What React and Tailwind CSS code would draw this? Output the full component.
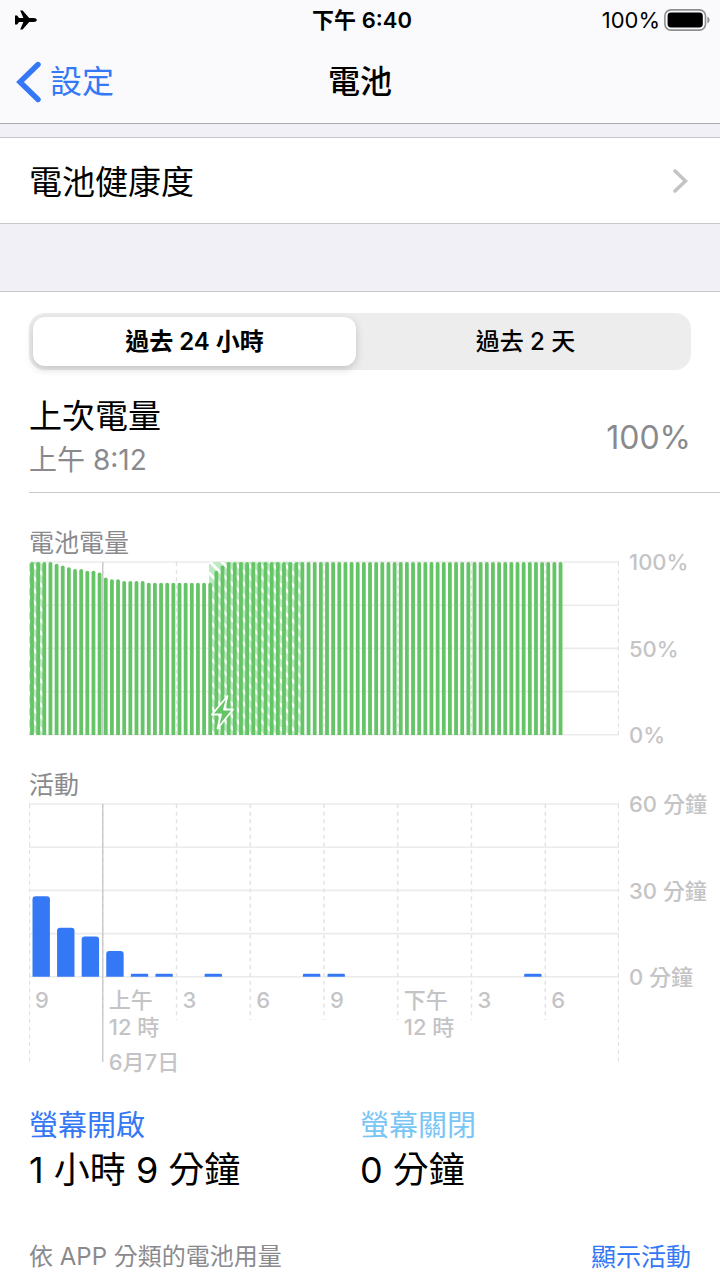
import React from "react";
import { useState } from "react";

const PLOT_WIDTH = 590;
const HOUR = PLOT_WIDTH / 24;

// one reading per quarter of an hour
const levels = [
  100, 100, 100, 100, 99, 98, 97, 96, 96, 95, 95, 94, 91, 90, 90, 89, 89, 89, 89,
  ...Array(11).fill(88),
  95, 98,
  ...Array(55).fill(100),
];

const charging = [
  { from: 0, width: 14 },
  { from: 180, width: 94 },
];

const activity = [
  { hour: 0, minutes: 28 },
  { hour: 1, minutes: 17 },
  { hour: 2, minutes: 14 },
  { hour: 3, minutes: 9 },
  { hour: 4, minutes: 1 },
  { hour: 5, minutes: 1 },
  { hour: 7, minutes: 1 },
  { hour: 11, minutes: 1 },
  { hour: 12, minutes: 1 },
  { hour: 20, minutes: 1 },
];

const hours = [
  { label: "9" },
  { label: "上午", second: "12 時", date: "6月7日" },
  { label: "3" },
  { label: "6" },
  { label: "9" },
  { label: "下午", second: "12 時" },
  { label: "3" },
  { label: "6" },
];

const Grid = ({ bottom, edgeBottom }) => (
  <g>
    {[0, 1, 2, 3, 4].map((i) => (
      <line key={i} x1="0" x2={PLOT_WIDTH} y1={1 + i * 43.2} y2={1 + i * 43.2} stroke="#ebebeb" strokeWidth="1.6" />
    ))}
    {[...Array(9).keys()].map((i) => {
      const x = Math.min(Math.max(i * 73.75, 0.5), PLOT_WIDTH - 0.5);
      const end = i === 0 || i === 8 ? edgeBottom : bottom;
      return (
        <line key={i} x1={x} x2={x} y1="1" y2={end} stroke="#e2e2e2" strokeWidth="1.4" strokeDasharray="4 3.68" />
      );
    })}
    <line x1="73.75" x2="73.75" y1="1" y2={edgeBottom} stroke="#c9c9cb" strokeWidth="1.4" />
  </g>
);

const BatteryChart = () => (
  <svg viewBox="0 0 590 175" className="block w-full" role="img" aria-label="電池電量">
    <defs>
      <pattern id="hatch" width="12" height="12" patternUnits="userSpaceOnUse">
        <rect width="12" height="12" fill="#bdeac1" />
        <path d="M-3 -3 L15 15 M-3 9 L3 15 M9 -3 L15 3" stroke="#fff" strokeWidth="3" />
      </pattern>
    </defs>
    <Grid bottom={174} edgeBottom={174} />
    {charging.map((c) => (
      <rect key={c.from} x={c.from} y="1" width={c.width} height="173" fill="url(#hatch)" />
    ))}
    {levels.map((level, i) => {
      const x = 1.1 + (i * HOUR) / 4;
      const top = 174 - level * 1.73;
      return (
        <path
          key={i}
          d={`M${x} 174 V${top + 1.8} a1.9 1.8 0 0 1 3.8 0 V174 Z`}
          fill="#65c466"
        />
      );
    })}
    <path
      d="M198.5 135 L183 153.5 H192 L188.5 167.5 L204 148.5 H195 Z"
      fill="#65c466"
      stroke="#fff"
      strokeWidth="1.8"
      strokeLinejoin="round"
    />
  </svg>
);

const ActivityChart = () => (
  <svg viewBox="0 0 590 260" className="col-start-1 row-start-1 block w-full" role="img" aria-label="活動">
    <Grid bottom={217} edgeBottom={259} />
    {activity.map(({ hour, minutes }) => {
      const x = 3.5 + hour * HOUR;
      const h = Math.max(minutes * 2.88, 3);
      const r = minutes > 1 ? 3 : 1;
      return (
        <path
          key={hour}
          d={`M${x} 173.8 v${r - h} q0 ${-r} ${r} ${-r} h${17.4 - 2 * r} q${r} 0 ${r} ${r} v${h - r} Z`}
          fill="#3478f6"
        />
      );
    })}
  </svg>
);

const ScaleLabels = ({ labels }) => (
  <div className="-my-3 flex h-[199px] w-[101px] flex-col justify-between pl-[10px] text-[22px] leading-[26px] font-medium whitespace-nowrap text-[#c4c4c6]">
    {labels.map((label) => (
      <span key={label}>{label}</span>
    ))}
  </div>
);

const Header = () => (
  <header className="border-b border-[#acacae] bg-[#fafafc]">
    <div className="grid h-10 grid-cols-3 items-center pr-[10px] pl-[14px] text-[22px]">
      <svg viewBox="0 0 24 20" className="h-5 w-6" aria-hidden="true">
        <path
          d="M22.8 10 c0 1.2 -1.3 2 -3 2 h-4.6 L8.6 19.4 H6.2 L9.4 12 H5 L3.2 14.4 H1 V5.6 H3.2 L5 8 H9.4 L6.2 0.6 H8.6 L15.2 8 h4.6 c1.7 0 3 .8 3 2 Z"
          fill="#000"
        />
      </svg>
      <span className="text-center font-semibold">下午 6:40</span>
      <span className="flex items-center justify-end gap-1">
        100%
        <svg viewBox="0 0 46 22" className="h-[22px] w-[46px]" aria-hidden="true">
          <rect x="0.9" y="0.9" width="40.6" height="20.2" rx="6" fill="none" stroke="#8e8e90" strokeWidth="1.6" />
          <rect x="3.6" y="3.6" width="35.2" height="14.8" rx="3.4" fill="#000" />
          <path d="M43.4 7.4 q2.2 1.2 2.2 3.6 q0 2.4 -2.2 3.6 Z" fill="#8e8e90" />
        </svg>
      </span>
    </div>
    <nav className="grid h-[83px] grid-cols-3 items-center px-4">
      <a href="#settings" className="flex items-center gap-2 text-[32px] text-[#3478f6]">
        <svg viewBox="0 0 26 42" className="h-[42px] w-[26px]" aria-hidden="true">
          <path d="M22 3.5 L4 21 L22 38.5" fill="none" stroke="#3478f6" strokeWidth="5.4" strokeLinecap="round" strokeLinejoin="miter" />
        </svg>
        設定
      </a>
      <h1 className="text-center text-[32px] font-medium">電池</h1>
    </nav>
  </header>
);

const App = () => {
  const [range, setRange] = useState("24h");

  const tabClass = (value) =>
    range === value
      ? "flex-1 rounded-xl bg-white font-semibold shadow-[0_3px_8px_rgba(0,0,0,0.18)]"
      : "flex-1 rounded-xl font-medium";

  return (
    <div
      lang="zh-Hant"
      className="min-h-screen bg-[#f0f0f6] font-['Inter','Noto_Sans_CJK_TC',sans-serif] text-black"
    >
      <Header />
      <a
        href="#health"
        className="mt-[13px] flex h-[87px] items-center justify-between border-y border-[#c8c8ca] bg-white pr-8 pl-[29px] text-[33px]"
      >
        <span className="pt-1">電池健康度</span>
        <svg viewBox="0 0 15 24" className="h-6 w-[15px]" aria-hidden="true">
          <path d="M2 2 L12.5 12 L2 22" fill="none" stroke="#c4c4c6" strokeWidth="3.6" strokeLinecap="round" />
        </svg>
      </a>

      <main className="mt-[67px] border-y border-[#c8c8ca] bg-white pt-[21px] pl-[29px]">
        <div className="mr-[29px] flex h-[57px] gap-2 rounded-2xl bg-[#ededee] p-1 text-[24px]">
          <button type="button" className={tabClass("24h")} onClick={() => setRange("24h")}>
            過去 24 小時
          </button>
          <button type="button" className={tabClass("2d")} onClick={() => setRange("2d")}>
            過去 2 天
          </button>
        </div>

        <section className="flex items-center justify-between border-b border-[#c8c8ca] pt-6 pr-[29px] pb-[10px]">
          <div>
            <h2 className="text-[33px] leading-[44px]">上次電量</h2>
            <p className="text-[28px] leading-[44px] text-[#8a8a8e]">上午 8:12</p>
          </div>
          <span className="text-[32px] text-[#8a8a8e]">100%</span>
        </section>

        <section className="pt-8">
          <h3 className="text-[25px] leading-9 text-[#8a8a8e]">電池電量</h3>
          <div className="flex items-start">
            <div className="min-w-0 flex-1">
              <BatteryChart />
            </div>
            <ScaleLabels labels={["100%", "50%", "0%"]} />
          </div>
        </section>

        <section className="pt-[31px]">
          <h3 className="text-[25px] leading-9 text-[#8a8a8e]">活動</h3>
          <div className="flex items-start">
            <div className="grid min-w-0 flex-1">
              <ActivityChart />
              <div className="col-start-1 row-start-1 mt-[184px] grid grid-cols-8 text-[22px] leading-[27px] font-medium whitespace-nowrap text-[#c4c4c6]">
                {hours.map((hour, i) => (
                  <div key={i} className="pl-[6px]">
                    <p>{hour.label}</p>
                    {hour.second && <p>{hour.second}</p>}
                    {hour.date && <p className="mt-2">{hour.date}</p>}
                  </div>
                ))}
              </div>
            </div>
            <ScaleLabels labels={["60 分鐘", "30 分鐘", "0 分鐘"]} />
          </div>
        </section>

        <section className="mr-[29px] grid grid-cols-2 pt-[30px]">
          <div>
            <h3 className="text-[29px] leading-10 text-[#3478f6]">螢幕開啟</h3>
            <p className="text-[36px] leading-[48px]">1 小時 9 分鐘</p>
          </div>
          <div>
            <h3 className="text-[29px] leading-10 text-[#79c5f5]">螢幕關閉</h3>
            <p className="text-[36px] leading-[48px]">0 分鐘</p>
          </div>
        </section>

        <div className="mr-[29px] flex justify-between pt-[45px] pb-[6px] leading-9">
          <h3 className="text-[24px] text-[#8a8a8e]">依 APP 分類的電池用量</h3>
          <button type="button" className="text-[25px] text-[#3478f6]">
            顯示活動
          </button>
        </div>
      </main>
    </div>
  );
};

export default App;
